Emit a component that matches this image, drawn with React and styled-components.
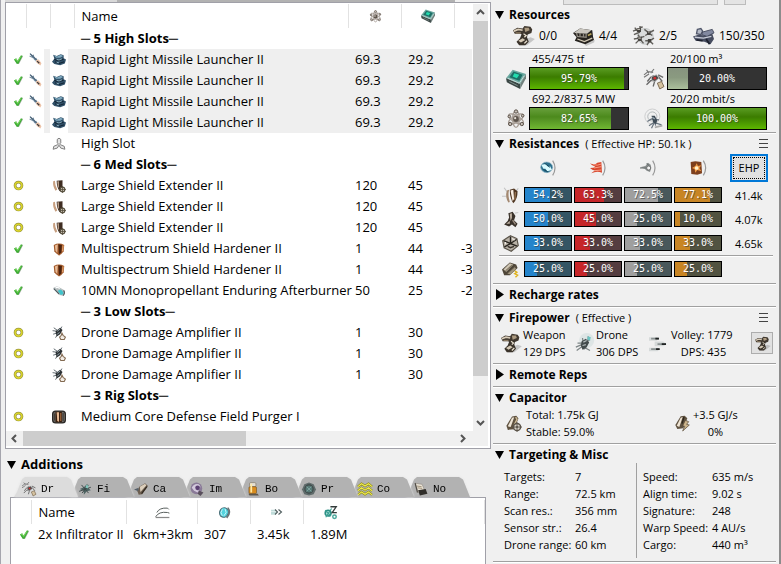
import React from "react";
import styled, { createGlobalStyle } from "styled-components";

const Global = createGlobalStyle`
  *, *::before, *::after { box-sizing: border-box; }
  html, body { margin: 0; background: #f0f0f0; }
  body { font-family: "Open Sans", "Noto Sans", sans-serif; color: #000; }
  button { font: inherit; color: inherit; margin: 0; padding: 0; border: 0; background: none; }
  h2, p, dl, dd, dt { margin: 0; font-weight: normal; }
`;

/* ---------- icons ---------- */

const Svg = styled.svg`
  display: block;
  flex: none;
  width: ${(p) => p.$size}px;
  height: ${(p) => p.$size}px;
  overflow: visible;
`;

const drawings = {
  check: (
    <>
      <path d="M4 14 L8 11 L11 15 L18 3 L22 5 L13 22 L9 22 Z" fill="#8a938a" opacity=".7" />
      <path d="M2 12 L7 9 L10 14 L17 3 L21 4 L12 21 L8 21 Z" fill="#3fae35" />
      <path d="M5 12 L7 11 L10 16 L17 5" fill="none" stroke="#8ade6e" strokeWidth="2" />
    </>
  ),
  ring: (
    <>
      <circle cx="12" cy="12" r="7.5" fill="#fff" stroke="#98953f" strokeWidth="6" />
      <circle cx="12" cy="12" r="7.5" fill="none" stroke="#e0da2a" strokeWidth="3" />
    </>
  ),
  rocket: (
    <>
      <path d="M1 1 L8 5 L17 14 L14 17 L5 8 Z" fill="#9fb4c4" />
      <path d="M2 1 L15 14" stroke="#3d566c" strokeWidth="2" />
      <path d="M1 6 L7 8 M8 3 L9 9 M10 12 L14 10" stroke="#57738a" strokeWidth="1.5" />
      <path d="M13 13 L18 12 L23 19 L21 23 L14 18 Z" fill="#edc3a8" />
      <path d="M15 15 L19 19" stroke="#3c3a3a" strokeWidth="2.4" />
    </>
  ),
  launcher: (
    <>
      <path d="M2 3 L8 5 L15 2 L20 4 L20 9 L24 11 L22 18 L14 21 L4 19 L0 15 L4 10 Z" fill="#32526a" />
      <path d="M3 4 L9 6 L15 3 L19 5 L14 8 L7 8 Z" fill="#7fa9bf" />
      <path d="M4 11 L10 13 L20 11 M5 15 L12 18 L21 15" stroke="#142636" strokeWidth="2" fill="none" />
      <path d="M8 11 L12 12 L17 10 M8 16 L12 17" stroke="#9cc0cf" strokeWidth="1.5" fill="none" />
    </>
  ),
  slot: (
    <g fill="#e4e4e4" stroke="#777" strokeWidth="1.6">
      <path d="M9 4 L12 2 L15 4 V10 L12 13 L9 10 Z" />
      <path d="M10 13 L3 16 L2 21 L9 19 L12 14" />
      <path d="M14 13 L21 16 L22 21 L15 19 L12 14" />
    </g>
  ),
  extender: (
    <>
      <path d="M2 4 Q1 13 6 20 L9 18 Q5 11 5 3 Z" fill="#c79f80" />
      <path d="M8 3 L18 2 L18 14 L13 21 Q8 14 8 3 Z" fill="#3f2d22" />
      <path d="M9 4 L12 4 L12 16 L10 13 Z" fill="#b49a85" />
      <circle cx="18" cy="18" r="4" fill="#d7cfc1" stroke="#57503f" strokeWidth="2" />
      <path d="M18 12 V24 M12 18 H24" stroke="#57503f" strokeWidth="1.4" />
    </>
  ),
  hardener: (
    <>
      <path d="M3 5 Q12 0 21 5 L20 16 Q16 22 12 23 Q6 20 4 16 Z" fill="#a25a2b" />
      <path d="M5 6 L10 4 L9 19 L6 15 Z" fill="#e9bd98" />
      <path d="M11 4 L12 21 L16 18 L17 5 Z" fill="#4a230f" />
      <path d="M19 6 L18 16" stroke="#e7a36d" strokeWidth="2" />
    </>
  ),
  burner: (
    <>
      <path d="M2 7 Q8 2 13 6 L20 10 Q24 16 19 20 L12 19 Z" fill="#b7bfc0" />
      <path d="M10 12 Q14 8 18 12 L20 17 L15 19 Z" fill="#3fc4cc" />
      <path d="M3 8 L12 17 M20 11 Q23 16 19 20" stroke="#4c5a5e" strokeWidth="2" fill="none" />
      <path d="M6 7 Q10 4 13 8" stroke="#fff" strokeWidth="2" fill="none" />
    </>
  ),
  droneAmp: (
    <>
      <path d="M1 8 L9 9 M3 3 L10 8 M2 14 L9 12 M6 20 L10 14 M17 1 L13 8" stroke="#59646a" strokeWidth="1.6" />
      <path d="M6 9 L14 3 L18 7 L14 14 L8 18 Z" fill="#2c3134" />
      <path d="M9 9 L14 5 M9 14 L13 11" stroke="#9eb1b8" strokeWidth="1.6" />
      <path d="M17 12 L19 16 L23 19 L21 23 H15 L13 19 L16 16 Z" fill="#f2ece5" stroke="#826a51" strokeWidth="1.8" />
    </>
  ),
  rig: (
    <>
      <rect x="0" y="1" width="24" height="22" rx="6" fill="#2a2826" />
      <rect x="2" y="3" width="20" height="18" rx="5" fill="#6e6a65" />
      <path d="M6 3 H17 V21 H6 Z" fill="#3a2011" />
      <path d="M8 4 L12 4 L12 20 L9 19 Z" fill="#e8bb95" />
      <path d="M15 5 V19" stroke="#a5693c" strokeWidth="2" />
      <path d="M19 5 V19 M4 6 V18" stroke="#3e3b37" strokeWidth="2" />
    </>
  ),
  atom: (
    <>
      <g fill="none" stroke="#a79d95" strokeWidth="1.6">
        <ellipse cx="12" cy="12" rx="4" ry="10" />
        <ellipse cx="12" cy="12" rx="4" ry="10" transform="rotate(60 12 12)" />
        <ellipse cx="12" cy="12" rx="4" ry="10" transform="rotate(120 12 12)" />
      </g>
      <circle cx="12" cy="12" r="3.5" fill="#5c534b" />
      <circle cx="11" cy="11" r="1.3" fill="#e7e0d8" />
      <g fill="#c6beb5" stroke="#5c534b" strokeWidth="1.2">
        <circle cx="12" cy="3" r="2" />
        <circle cx="4" cy="9" r="1.6" />
        <circle cx="20" cy="8" r="1.6" />
        <circle cx="5" cy="18" r="2" />
        <circle cx="19" cy="18" r="2" />
      </g>
    </>
  ),
  cpu: (
    <>
      <path d="M8 1 L24 6 L17 18 L0 11 Z" fill="#6aa79f" />
      <path d="M0 11 L17 18 L17 24 L1 16 Z" fill="#3a4644" />
      <path d="M24 6 L24 11 L17 24 L17 18 Z" fill="#71807d" />
      <path d="M9 3 L20 7 L16 14 L4 10 Z" fill="#1c6f66" />
      <path d="M10 5 L16 7 L13 11 L8 9 Z" fill="#22dcae" />
      <path d="M2 11 L16 17 L22 8" stroke="#c3dcd8" strokeWidth="1.2" fill="none" />
      <path d="M4 15 L14 20" stroke="#7a8b88" strokeWidth="1.2" />
    </>
  ),
  turret: (
    <>
      <path d="M12 17 L20 14 L25 16 L16 23 L8 23 Z" fill="#999" opacity=".5" />
      <path d="M0 6 L5 3 L11 4 L13 1 L20 2 L22 5 L21 9 L14 12 L8 10 L2 10 Z" fill="#40382f" />
      <path d="M1 7 L6 5 L11 6" stroke="#d9cdb9" strokeWidth="2" fill="none" />
      <path d="M13 3 L18 3 L19 6 L14 8 Z" fill="#ab9a80" />
      <path d="M10 10 L17 9 L16 14 L18 19 L14 23 L7 23 L4 19 L8 15 Z" fill="#3a332a" />
      <path d="M6 18 L11 15 L14 17 L9 20 Z" fill="#d6cab6" />
      <path d="M12 10 L15 12 L13 14 M13 21 L16 18" stroke="#e8dfcf" strokeWidth="1.5" fill="none" />
      <path d="M3 9 L9 9" stroke="#8d7c63" strokeWidth="1.5" />
    </>
  ),
  hardpoint: (
    <>
      <path d="M13 22 L25 17 L24 20 L15 24 Z" fill="#999" opacity=".5" />
      <path d="M0 9 L8 4 L22 6 L23 14 L24 17 L14 22 L2 18 L4 14 Z" fill="#26231f" />
      <path d="M1 9 L8 4 L21 6 L16 10 Z" fill="#c9c6bf" />
      <path d="M4 9 L5 13 L15 14 L15 10 M8 9 V13 M12 10 V13" stroke="#8e8980" strokeWidth="1.5" fill="none" />
      <path d="M5 16 L13 19 L22 15" stroke="#d0c7b3" strokeWidth="1.5" fill="none" />
      <path d="M17 12 L21 10" stroke="#b7a55c" strokeWidth="2" />
    </>
  ),
  drones: (
    <>
      <circle cx="14" cy="13" r="9" fill="#dadcdc" stroke="#bfc2c2" />
      <g stroke="#615f5b" strokeWidth="1.6" fill="none">
        <path d="M0 7 L5 5 L11 2 M2 3 L6 8 M8 1 L8 8 M1 11 L8 8" />
        <path d="M13 5 L18 9 L24 6 M14 12 L19 9 M22 12 L18 9" />
        <path d="M1 16 L7 15 L13 13 M3 21 L8 16 L12 21 M6 11 L8 16" />
        <path d="M14 18 L19 18 L24 15 M16 23 L19 18 L23 22" />
      </g>
      <path d="M4 4 L9 3 L9 8 L5 8 Z M16 7 L20 7 L20 11 L16 11 Z M5 14 L10 13 L10 18 L6 18 Z M17 16 L21 16 L20 20 L17 20 Z" fill="#44423e" />
      <path d="M5 5 L8 5 M17 8 L19 8 M6 15 L9 15" stroke="#bcb8b1" strokeWidth="1.4" />
    </>
  ),
  calibration: (
    <>
      <path d="M0 13 L6 11 L14 12 L22 10 L24 16 L20 22 L13 19 L3 18 Z" fill="#474d60" />
      <path d="M5 5 L9 4 L11 7 L9 11 L4 10 Z" fill="#b6bbc7" stroke="#50566a" strokeWidth="1.5" />
      <path d="M11 8 L22 5 L24 9 L16 13 L10 11 Z" fill="#8289a0" stroke="#3f4558" />
      <path d="M2 14 L12 15 L21 13" stroke="#c8ccd8" strokeWidth="1.6" fill="none" />
      <path d="M15 16 L19 22 M4 17 L11 18" stroke="#1f2330" strokeWidth="2" fill="none" />
    </>
  ),
  droneBay: (
    <>
      <path d="M0 7 L5 3 L11 4 M3 1 L6 5 M0 10 L6 6 M12 0 L8 5" stroke="#777" strokeWidth="1.4" fill="none" />
      <path d="M4 15 L8 10 L12 8 M3 19 L8 14 L13 14 L11 21 M17 7 L23 10 M17 9 L22 15" stroke="#686868" strokeWidth="1.6" fill="none" />
      <path d="M9 9 L15 7 L18 11 L13 15 L9 13 Z" fill="#4b4b4b" stroke="#b9b9b9" />
      <circle cx="13" cy="11" r="1.6" fill="#d12f2f" />
      <path d="M16 17 L21 15 L24 21 L19 24 Z" fill="#d4c19f" stroke="#6c5a42" />
    </>
  ),
  bandwidth: (
    <>
      <circle cx="10" cy="9" r="9" fill="none" stroke="#c6c8c9" />
      <circle cx="10" cy="9" r="5.5" fill="none" stroke="#a7adb0" />
      <path d="M4 15 L9 12 L18 13 M6 20 L12 16 L21 19 M12 10 L14 20 M9 23 L12 17" stroke="#6a7680" strokeWidth="1.5" fill="none" />
      <path d="M9 8 L13 8 L16 14 L14 18 L11 16 Z" fill="#3e4b56" />
      <path d="M10 10 L13 12" stroke="#9eacb6" strokeWidth="1.5" />
      <path d="M13 22 L22 20" stroke="#aaa" strokeWidth="2" />
    </>
  ),
  em: (
    <>
      <ellipse cx="10" cy="11" rx="9" ry="8" fill="#2c6f8c" stroke="#8fb6c8" />
      <path d="M2 7 L9 6 L12 10 L15 9 L18 15 L11 17 L8 13 L5 13 Z" fill="#d9fbff" />
      <path d="M7 5 L15 11 M5 14 L12 18" stroke="#174a61" strokeWidth="1.5" />
      <path d="M19 1 Q26 12 19 23" fill="none" stroke="#999" strokeWidth="1.8" />
    </>
  ),
  thermal: (
    <>
      <path d="M0 5 Q7 8 11 4 L17 3 L18 19 Q10 16 2 20 Q5 16 8 16 Q3 15 0 12 Q6 12 8 10 Q3 9 0 5 Z" fill="#d8472e" />
      <path d="M5 7 Q11 9 17 6 M6 12 L17 10 M7 16 L17 15" stroke="#ffb49b" strokeWidth="1.2" fill="none" />
      <path d="M19 1 Q26 12 19 23" fill="none" stroke="#999" strokeWidth="1.8" />
    </>
  ),
  kinetic: (
    <>
      <path d="M0 11 L8 9 L12 4 L16 7 L17 12 L15 18 L10 16 L7 13 Z" fill="#8b9090" />
      <circle cx="13" cy="12" r="3" fill="#f4f5f5" stroke="#555" />
      <path d="M0 12 L9 12 M10 5 L13 8" stroke="#6a7070" strokeWidth="1.6" />
      <path d="M19 1 Q26 12 19 23" fill="none" stroke="#999" strokeWidth="1.8" />
    </>
  ),
  explosive: (
    <>
      <path d="M1 3 L8 2 L17 3 L18 20 L11 22 L2 21 Z" fill="#7d3f1d" />
      <path d="M10 5 L12 9 L17 8 L14 12 L17 17 L11 15 L8 19 L7 14 L3 12 L8 9 Z" fill="#f09a45" />
      <circle cx="10" cy="12" r="2.8" fill="#fff3cf" />
      <path d="M20 1 Q27 12 20 23" fill="none" stroke="#999" strokeWidth="1.8" />
    </>
  ),
  shield: (
    <>
      <path d="M3 1 L8 8 M23 2 L18 8 M0 13 L6 13" stroke="#c4c4c4" strokeWidth="1.5" />
      <path d="M7 5 Q4 14 9 22 L11 21 Q8 12 10 4 Z" fill="#a38870" />
      <path d="M11 4 L17 2 L22 6 Q22 17 16 23 Q11 16 11 4 Z" fill="#4f3520" />
      <path d="M12 5 L16 4 L17 17 L15 20 Z" fill="#fbf0e4" />
      <path d="M19 7 L18 18" stroke="#93714f" strokeWidth="2" />
    </>
  ),
  armor: (
    <>
      <path d="M9 3 L15 1 L19 7 L17 13 L22 18 L19 23 L14 19 L10 22 L3 19 L8 14 L10 9 Z" fill="#3a322a" />
      <path d="M11 4 L14 3 L14 10 L12 14 Z M6 18 L11 14 L11 18 Z" fill="#c0b2a3" />
      <path d="M15 13 L19 19" stroke="#998b7e" strokeWidth="2" />
      <path d="M18 3 L23 2" stroke="#ccc" strokeWidth="1.5" />
    </>
  ),
  hull: (
    <>
      <path d="M12 1 L21 5 L23 15 L13 23 L3 18 L1 8 Z" fill="#b8b1a6" />
      <path d="M12 2 L12 12 L3 17 M12 12 L22 16 M2 8 L12 12 L21 6" stroke="#28251f" strokeWidth="2" fill="none" />
      <path d="M12 1 L21 5 L23 15 L13 23 L3 18 L1 8 Z" stroke="#5a5449" strokeWidth="1.6" fill="none" />
      <path d="M8 16 L12 18 L17 16" stroke="#38332b" strokeWidth="2" fill="none" />
      <path d="M14 5 L18 7 M5 13 V10" stroke="#f0ece5" strokeWidth="1.5" fill="none" />
    </>
  ),
  damage: (
    <>
      <path d="M0 12 L11 2 L20 5 L22 10 L11 20 L3 20 Z" fill="#4e4638" />
      <path d="M2 12 L11 3 L16 5 L6 15 Z" fill="#cfc6b4" />
      <path d="M5 14 L15 5 M8 18 L19 8" stroke="#7b705b" strokeWidth="1.5" />
      <path d="M8 18 L18 9 L20 11 L12 19 Z" fill="#a39880" />
      <path d="M18 14 L21 16 L18 18 L22 20 L19 23" stroke="#dfb21c" strokeWidth="2" fill="none" />
    </>
  ),
  droneDps: (
    <>
      <circle cx="14" cy="9" r="9" fill="#dbe3e3" opacity=".9" />
      <path d="M3 12 L9 12 L18 8 M2 21 L9 16 L18 21 M9 6 L11 20 M16 4 L15 13 M1 17 L8 14" stroke="#7d8586" strokeWidth="1.5" fill="none" />
      <path d="M8 10 L13 7 L17 11 L14 17 L9 20 L7 15 Z" fill="#434b4c" />
      <path d="M15 4 L19 5 L18 9 L15 8 Z" fill="#6cc4c2" />
      <path d="M10 11 L14 9 M9 15 L13 14" stroke="#b4bdbd" strokeWidth="1.5" />
    </>
  ),
  volley: (
    <>
      <path d="M0 3 H11 L14 5 L11 8 H0 Z M8 9 H20 L25 13 L20 16 H8 Z M0 18 H12 L15 20 L12 23 H0 Z" fill="#d5d9d9" />
      <path d="M3 5 L14 5 M12 13 L24 13 M3 20 L15 20" stroke="#8b9292" strokeWidth="2.4" />
      <path d="M9 5 L14 5 M18 13 L24 13 M10 20 L15 20" stroke="#1f2222" strokeWidth="2.4" />
    </>
  ),
  capacitor: (
    <>
      <path d="M10 2 L16 1 L19 5 L13 20 L4 21 L2 15 Z" fill="#5f5240" />
      <path d="M10 4 L13 3 L8 17 L4 16 Z" fill="#efe6d7" />
      <path d="M15 3 L17 6 L13 14" stroke="#cbb894" strokeWidth="2" fill="none" />
      <circle cx="17" cy="17" r="5" fill="#d7d2c9" stroke="#5b544a" strokeWidth="2" />
      <path d="M17 10 V24 M10 17 H24" stroke="#5b544a" strokeWidth="1.3" />
      <circle cx="17" cy="17" r="1.5" fill="#5b544a" />
    </>
  ),
  recharge: (
    <>
      <path d="M10 2 L16 1 L20 5 L14 20 L5 21 L2 15 Z" fill="#5f5240" />
      <path d="M10 4 L13 3 L8 18 L4 16 Z" fill="#efe4d3" />
      <path d="M15 3 L12 13" stroke="#2e261b" strokeWidth="2" />
      <path d="M17 8 L22 10 L19 14 L23 15 L13 24 L16 17 L13 16 Z" fill="#cdb58c" stroke="#4b3e2b" />
    </>
  ),
  fighter: (
    <>
      <path d="M3 12 L10 9 L16 3 L17 10 L22 14 L15 16 L10 22 L10 15 Z" fill="#4d6362" />
      <path d="M6 5 L18 19 M18 5 L7 19 M2 16 L22 9" stroke="#3b4747" strokeWidth="1.6" />
      <path d="M14 5 L18 6 L17 11 L13 10 Z" fill="#81c5bb" />
    </>
  ),
  cargo: (
    <>
      <path d="M9 8 L19 2 L24 7 L14 21 L8 22 L6 16 Z" fill="#6d5f50" />
      <path d="M10 8 L19 3 L21 6 L11 17 Z" fill="#dccfbc" />
      <path d="M0 13 L8 10 L7 16 Z" fill="#56606a" />
      <path d="M22 8 L13 20" stroke="#30281f" strokeWidth="2" />
    </>
  ),
  implant: (
    <>
      <circle cx="11" cy="11" r="10" fill="#8a7a98" />
      <path d="M3 10 Q7 2 15 4 Q20 8 16 12 L13 18 L7 15 Z" fill="#d3c9dc" />
      <circle cx="13" cy="10" r="4" fill="#5b4072" />
      <path d="M16 15 L23 18 L18 24 L13 20 Z" fill="#594f5c" />
    </>
  ),
  booster: (
    <>
      <rect x="6" y="1" width="11" height="7" rx="2" fill="#e4dfd4" stroke="#756b5a" />
      <rect x="5" y="8" width="13" height="12" rx="2" fill="#d98c1e" stroke="#6a4a1d" />
      <path d="M9 3 V18" stroke="#ffe9a5" strokeWidth="3" />
      <path d="M4 20 H20 L22 23 H6 Z" fill="#5e574c" />
    </>
  ),
  projected: (
    <>
      <path d="M0 13 L4 4 L12 1 L20 4 L24 13 L20 21 L12 23 L4 21 Z" fill="#5f6b6b" />
      <circle cx="12" cy="12" r="7" fill="#587a76" stroke="#3d4848" strokeWidth="2" />
      <path d="M8 8 L16 16 M16 8 L8 16" stroke="#7fa39f" strokeWidth="1.6" />
    </>
  ),
  command: (
    <g fill="none">
      <path d="M0 8 L6 3 L12 7 L18 3 L24 8 M0 15 L6 10 L12 14 L18 10 L24 15 M0 22 L6 17 L12 21 L18 17 L24 22" stroke="#8b8a18" strokeWidth="4" />
      <path d="M0 8 L6 3 L12 7 L18 3 L24 8 M0 15 L6 10 L12 14 L18 10 L24 15 M0 22 L6 17 L12 21 L18 17 L24 22" stroke="#eee94e" strokeWidth="2" />
    </g>
  ),
  notes: (
    <>
      <path d="M2 2 L14 4 L18 14 L7 18 Z" fill="#e9e3d6" stroke="#8b857c" />
      <path d="M7 14 L20 12 L23 20 L10 23 Z" fill="#302e2a" />
      <path d="M5 7 L13 8 M6 10 L14 11" stroke="#9b8c72" strokeWidth="1.5" />
      <path d="M2 2 L6 18" stroke="#514d46" strokeWidth="2" />
    </>
  ),
  range: (
    <g fill="none" stroke="#59605e" strokeWidth="1.6">
      <path d="M3 12 Q7 4 20 5 L22 7" />
      <path d="M1 19 Q6 10 20 12 L23 13" />
      <path d="M1 20 H23" stroke="#888" strokeWidth="2" />
    </g>
  ),
  cycle: (
    <>
      <ellipse cx="11" cy="12" rx="8" ry="9" fill="#52d3de" stroke="#4c6f78" strokeWidth="2" transform="rotate(20 11 12)" />
      <path d="M8 6 Q3 12 8 18 M13 5 L15 12 L11 18" stroke="#e2fcff" strokeWidth="1.5" fill="none" />
      <path d="M18 3 Q25 12 16 22" stroke="#687477" strokeWidth="3" fill="none" />
    </>
  ),
  speed: (
    <>
      <path d="M0 9 H10 M0 13 H12 M0 16 H9" stroke="#a8cfcd" strokeWidth="3" opacity=".7" />
      <path d="M8 7 L13 12 L8 17 M15 7 L21 12 L15 17" stroke="#4f5d5e" strokeWidth="2.2" fill="none" />
    </>
  ),
  tracking: (
    <>
      <circle cx="7" cy="14" r="5" fill="#a8dcd5" stroke="#2b8d83" strokeWidth="2.6" />
      <circle cx="18" cy="20" r="3" fill="none" stroke="#4ba79c" strokeWidth="2.5" />
      <path d="M3 21 L13 6 M2 9 L12 19" stroke="#3ba094" strokeWidth="2" />
      <path d="M11 3 H21 L14 13 H22" stroke="#333c3b" strokeWidth="2.2" fill="none" />
    </>
  ),
};

const Icon = ({ name, size = 16 }) => (
  <Svg $size={size} viewBox="0 0 24 24" aria-hidden="true">{drawings[name]}</Svg>
);

const Triangle = ({ open }) => (
  <Svg $size={9} viewBox="0 0 9 9" aria-hidden="true">
    <path d={open ? "M0 1 H9 L4.5 9 Z" : "M1 -1 L9 4.5 L1 10 Z"} />
  </Svg>
);

const Chevron = ({ d }) => (
  <Svg $size={9} viewBox="0 0 9 9" aria-hidden="true">
    <path d={d} fill="none" stroke="#555" strokeWidth="2" />
  </Svg>
);

/* ---------- window ---------- */

const Window = styled.div`
  display: grid;
  grid-template-columns: minmax(0, 1fr) 288px;
  min-height: 100vh;
  border-left: 1px solid #a5a5ad;
  border-right: 2px solid #8c8c8c;
  background: #f0f0f0;
  line-height: 17px;
`;

const Fitting = styled.main`
  display: flex;
  flex-direction: column;
  min-width: 0;
  padding: 0 0 0 4px;
`;

const FitTabs = styled.div`
  height: 2px;
  margin-right: 36px;
  background: linear-gradient(#d8d8d8, #d8d8d8) 0 0 / 112px 100% no-repeat, #b2b2b2;
`;

const FitPanel = styled.section`
  display: grid;
  grid-template-columns: minmax(0, 1fr) 15px;
  column-gap: 1px;
  padding: 1px 2px 2px 0;
  border: 1px solid #a0a0a8;
  background: #fff;
  font-size: 13px;
`;

const TableClip = styled.div`
  min-width: 0;
  overflow: hidden;
  padding-bottom: 4px;
`;

const Modules = styled.table`
  width: 100%;
  table-layout: fixed;
  border-collapse: collapse;
`;

const HeadCell = styled.th`
  width: ${(p) => (p.$w ? `${p.$w}px` : "auto")};
  height: 24px;
  padding: 0 6px 0 7px;
  border-right: ${(p) => (p.$last ? "0" : "1px solid #e2e2e2")};
  font-weight: normal;
  text-align: left;
  svg { margin: ${(p) => (p.$wide ? "0 0 0 13px" : "0 auto")}; }
`;

const Cell = styled.td`
  height: 21px;
  padding: 0 0 0 7px;
  white-space: nowrap;
  background: ${(p) => (p.$lit ? "#efefef" : "#fff")};
`;

const GroupCell = styled(Cell)`
  font-weight: bold;
`;

const IconCell = styled(Cell)`
  padding: 0 0 0 ${(p) => p.$pad}px;
  background: ${(p) =>
    p.$lit ? "linear-gradient(to right, #fff 18px, #efefef 18px)" : "#fff"};
`;

const VScroll = styled.div`
  display: grid;
  grid-template-rows: 17px minmax(0, 356fr) minmax(0, 38fr) 17px;
  background: #f0f0f0;
`;

const HScroll = styled.div`
  grid-column: 1 / -1;
  display: grid;
  grid-template-columns: 17px minmax(0, 224fr) minmax(0, 208fr) 17px 17px;
  height: 15px;
  background: #f0f0f0;
`;

const ScrollButton = styled.button`
  display: grid;
  place-items: center;
`;

const Thumb = styled.div`
  background: #cdcdcd;
`;

/* ---------- additions ---------- */

const Additions = styled.section`
  flex: 1;
  display: flex;
  flex-direction: column;
  padding: 7px 5px 0 2px;
  font-size: 13px;
`;

const Disclosure = styled.button`
  display: flex;
  align-items: center;
  gap: 5px;
  height: 17px;
  font-weight: bold;
  white-space: nowrap;
`;

const TabStrip = styled.div`
  display: flex;
  margin-top: 4px;
  padding-left: 7px;
`;

const TabShell = styled.div`
  z-index: ${(p) => p.$z};
  width: 64px;
  margin-right: -8px;
  filter: drop-shadow(0 0 1px #e2e2e2);
`;

const Tab = styled.button`
  display: flex;
  align-items: center;
  gap: 5px;
  width: 100%;
  height: 20px;
  padding: 4px 0 0 8px;
  clip-path: polygon(0 100%, 3px 75%, 8px 12%, 11px 0, 53px 0, 57px 12%, 64px 100%);
  background: ${(p) => (p.$on ? "#dcdcdc" : "#b2b2b2")};
  font: 11px "Liberation Mono", monospace;
`;

const DronePanel = styled.div`
  flex: 1;
  margin-left: 3px;
  padding-top: 2px;
  border: 1px solid #a0a0a8;
  border-bottom: 0;
  background: #fff;
`;

/* ---------- statistics ---------- */

const Stats = styled.aside`
  padding: 0 3px 0 2px;
  font-size: 11px;
`;

const Toolbar = styled.div`
  display: flex;
  justify-content: flex-end;
  gap: 6px;
  height: 5px;
  padding-right: 30px;
`;

const ToolBox = styled.div`
  width: ${(p) => p.$w}px;
  border: 1px solid #bcbcbc;
  border-top: 0;
  background: #e4e4e4;
`;

const Section = styled.section`
  padding-bottom: ${(p) => p.$pb || 4}px;
  border-bottom: 1px solid #fff;
  box-shadow: inset 0 -1px 0 #a0a0a0;
`;

const SectionHead = styled.h2`
  display: flex;
  align-items: center;
  height: 18px;
  padding: 0 8px 0 2px;
  font-size: 12px;
`;

const Note = styled.span`
  margin-left: 6px;
  font-size: 11px;
`;

const MenuButton = styled.button`
  display: grid;
  align-content: space-between;
  width: 9px;
  height: 9px;
  margin-left: auto;
  span { height: 1px; background: #444; }
`;

const Rule = styled.hr`
  height: 2px;
  margin: 0 3px 0 6px;
  border: 0;
  background: linear-gradient(#a0a0a0 50%, #fff 50%);
`;

const Counts = styled.div`
  display: grid;
  grid-template-columns: 60fr 60fr 60fr 76fr;
  height: 25px;
  padding: 0 7px 0 20px;
  font-size: 12px;
`;

const Pair = styled.div`
  display: flex;
  align-items: center;
  gap: ${(p) => p.$gap || 5}px;
  white-space: nowrap;
`;

const Meters = styled.div`
  display: grid;
  grid-template-columns: repeat(2, minmax(0, 1fr));
  column-gap: 15px;
  padding: 0 9px 0 13px;
`;

const Meter = styled.div`
  display: grid;
  grid-template-columns: 21px minmax(0, 1fr);
  column-gap: 2px;
  align-items: center;
  > span { grid-column: 2; height: 17px; padding-left: 3px; }
`;

const Track = styled.div`
  display: grid;
  height: ${(p) => (p.$small ? 16 : 23)}px;
  border: 1px solid #000;
  background: ${(p) => p.$bg};
  > * { grid-area: 1 / 1; }
`;

const Fill = styled.div`
  background: ${(p) => p.$paint};
`;

const TrackText = styled.div`
  z-index: 1;
  align-self: center;
  color: #fff;
  font: 10px/12px "DejaVu Sans Mono", monospace;
  text-align: center;
  text-shadow: 1px 1px 0 rgba(60, 60, 60, 0.6);
`;

const Bar = ({ value, text, paint, bg, small }) => (
  <Track $small={small} $bg={bg}>
    <Fill $paint={paint} style={{ width: `${value}%` }} />
    <TrackText>{text}</TrackText>
  </Track>
);

const ResistTable = styled.table`
  width: 100%;
  table-layout: fixed;
  border-collapse: collapse;
  col:first-child { width: 30px; }
  col:last-child { width: 53px; }
  td, th { padding: 0 1px; height: 24px; font-weight: normal; text-align: left; }
  td:first-child { padding-left: 9px; }
  td:last-child { padding-left: 12px; }
  thead th { height: 31px; }
  thead th:last-child { padding: 0 8px 0 7px; }
  thead svg { margin: 0 auto; }
`;

const EhpButton = styled.button`
  display: block;
  width: 100%;
  height: 28px;
  border: 2px solid #0078d7;
  background: #e1e1e1;
  outline: 1px dotted #000;
  outline-offset: -4px;
`;

const Fire = styled.div`
  display: grid;
  grid-template-columns: 74px 74px minmax(0, 1fr) 22px;
  align-items: center;
  height: 34px;
  padding: 0 3px 0 8px;
`;

const Lines = styled.div`
  text-align: ${(p) => p.$align || "left"};
`;

const VolleyList = styled.dl`
  display: grid;
  grid-template-columns: auto auto;
  column-gap: 3px;
  dt { text-align: right; }
`;

const WeaponButton = styled.button`
  display: grid;
  place-items: center;
  width: 22px;
  height: 22px;
  border: 1px solid #adadad;
  background: #e1e1e1;
`;

const Capacitor = styled.div`
  display: grid;
  grid-template-columns: 169px minmax(0, 1fr);
  height: 34px;
  padding-left: 12px;
`;

const Misc = styled.div`
  display: grid;
  grid-template-columns: 143px minmax(0, 1fr);
`;

const Facts = styled.dl`
  display: grid;
  grid-template-columns: ${(p) => p.$label}px minmax(0, 1fr);
  padding: 5px 0 5px ${(p) => (p.$ruled ? 6 : 11)}px;
  border-left: ${(p) => (p.$ruled ? "1px solid #a0a0a0" : "0")};
  white-space: nowrap;
`;

/* ---------- data ---------- */

const launcher = { state: "check", ammo: "rocket", icon: "launcher", name: "Rapid Light Missile Launcher II", pg: "69.3", cpu: "29.2", lit: true };
const extender = { state: "ring", icon: "extender", name: "Large Shield Extender II", pg: "120", cpu: "45" };
const hardener = { state: "check", icon: "hardener", name: "Multispectrum Shield Hardener II", pg: "1", cpu: "44", cap: "-3" };
const amplifier = { state: "ring", icon: "droneAmp", name: "Drone Damage Amplifier II", pg: "1", cpu: "30" };

const rows = [
  { group: "─ 5 High Slots─" },
  launcher, launcher, launcher, launcher,
  { icon: "slot", name: "High Slot" },
  { group: "─ 6 Med Slots─" },
  extender, extender, extender,
  hardener, hardener,
  { state: "check", icon: "burner", name: "10MN Monopropellant Enduring Afterburner", pg: "50", cpu: "25", cap: "-2" },
  { group: "─ 3 Low Slots─" },
  amplifier, amplifier, amplifier,
  { group: "─ 3 Rig Slots─" },
  { state: "ring", icon: "rig", name: "Medium Core Defense Field Purger I" },
];

const tabs = [
  ["droneBay", "Dr"], ["fighter", "Fi"], ["cargo", "Ca"], ["implant", "Im"],
  ["booster", "Bo"], ["projected", "Pr"], ["command", "Co"], ["notes", "No"],
];

const green = "linear-gradient(#5a9c22, #3c7c00 42%, #3f8400 50%, #5db600)";
const softGreen = "linear-gradient(#689f3c, #4c8a1c 42%, #528f22 50%, #70b732)";
const paleGreen = "linear-gradient(#87947f, #8a9a80 45%, #abc09c)";

const meters = [
  ["cpu", "455/475 tf", 95.79, "95.79%", green],
  ["droneBay", "20/100 m³", 20, "20.00%", paleGreen],
  ["atom", "692.2/837.5 MW", 82.65, "82.65%", softGreen],
  ["bandwidth", "20/20 mbit/s", 100, "100.00%", green],
];

const damageTypes = [
  ["#2484cb", "#345564"],
  ["#c62629", "#553d40"],
  ["#9f9f9f", "#49585b"],
  ["#c88524", "#525341"],
];

const layers = [
  ["shield", [54.2, 63.3, 72.5, 77.1], "41.4k"],
  ["armor", [50, 45, 25, 10], "4.07k"],
  ["hull", [33, 33, 33, 33], "4.65k"],
];

const Layer = ({ icon, values, hp }) => (
  <tr>
    <td><Icon name={icon} size={17} /></td>
    {values.map((v, i) => (
      <td key={i}>
        <Bar small value={v} text={`${v.toFixed(1)}%`} paint={damageTypes[i][0]} bg={damageTypes[i][1]} />
      </td>
    ))}
    <td>{hp}</td>
  </tr>
);

const ResistCols = () => (
  <colgroup><col /><col /><col /><col /><col /><col /></colgroup>
);

const Head = ({ title, note, open = true, menu }) => (
  <SectionHead>
    <Disclosure aria-expanded={open}><Triangle open={open} />{title}</Disclosure>
    {note && <Note>{note}</Note>}
    {menu && <MenuButton aria-label={`${title} menu`}><span /><span /><span /></MenuButton>}
  </SectionHead>
);

const FactList = ({ items, label, ruled }) => (
  <Facts $label={label} $ruled={ruled}>
    {items.map(([k, v]) => (
      <React.Fragment key={k}><dt>{k}</dt><dd>{v}</dd></React.Fragment>
    ))}
  </Facts>
);

export default function App() {
  return (
    <>
      <Global />
      <Window>
        <Fitting>
          <FitTabs />
          <FitPanel>
            <TableClip>
              <Modules>
                <thead>
                  <tr>
                    <HeadCell $w={20} />
                    <HeadCell $w={24} />
                    <HeadCell $w={24} />
                    <HeadCell>Name</HeadCell>
                    <HeadCell $w={53}><Icon name="atom" size={13} /></HeadCell>
                    <HeadCell $w={53}><Icon name="cpu" size={14} /></HeadCell>
                    <HeadCell $w={18} $last />
                  </tr>
                </thead>
                <tbody>
                  {rows.map((r, i) =>
                    r.group ? (
                      <tr key={i}><Cell colSpan={3} /><GroupCell colSpan={4}>{r.group}</GroupCell></tr>
                    ) : (
                      <tr key={i}>
                        <IconCell $pad={7}>{r.state && <Icon name={r.state} size={11} />}</IconCell>
                        <IconCell $pad={3} $lit={r.lit}>{r.ammo && <Icon name={r.ammo} size={13} />}</IconCell>
                        <IconCell $pad={2} $lit={r.lit}><Icon name={r.icon} size={14} /></IconCell>
                        <Cell $lit={r.lit}>{r.name}</Cell>
                        <Cell $lit={r.lit}>{r.pg}</Cell>
                        <Cell $lit={r.lit}>{r.cpu}</Cell>
                        <Cell $lit={r.lit}>{r.cap}</Cell>
                      </tr>
                    )
                  )}
                </tbody>
              </Modules>
            </TableClip>
            <VScroll>
              <ScrollButton aria-label="Scroll up"><Chevron d="M1 6 L4.5 2.5 L8 6" /></ScrollButton>
              <Thumb />
              <div />
              <ScrollButton aria-label="Scroll down"><Chevron d="M1 3 L4.5 6.5 L8 3" /></ScrollButton>
            </VScroll>
            <HScroll>
              <ScrollButton aria-label="Scroll left"><Chevron d="M6 1 L2.5 4.5 L6 8" /></ScrollButton>
              <Thumb />
              <div />
              <ScrollButton aria-label="Scroll right"><Chevron d="M3 1 L6.5 4.5 L3 8" /></ScrollButton>
            </HScroll>
          </FitPanel>

          <Additions>
            <Disclosure aria-expanded="true"><Triangle open />Additions</Disclosure>
            <TabStrip role="tablist">
              {tabs.map(([icon, label], i) => (
                <TabShell key={label} $z={tabs.length - i}>
                  <Tab role="tab" aria-selected={i === 0} $on={i === 0}><Icon name={icon} size={14} />{label}</Tab>
                </TabShell>
              ))}
            </TabStrip>
            <DronePanel>
              <Modules>
                <thead>
                  <tr>
                    <HeadCell $w={20} />
                    <HeadCell $w={95}>Name</HeadCell>
                    <HeadCell $w={71}><Icon name="range" size={15} /></HeadCell>
                    <HeadCell $w={53}><Icon name="cycle" size={13} /></HeadCell>
                    <HeadCell $w={53}><Icon name="speed" size={12} /></HeadCell>
                    <HeadCell $wide><Icon name="tracking" size={14} /></HeadCell>
                  </tr>
                </thead>
                <tbody>
                  <tr>
                    <IconCell $pad={8}><Icon name="check" size={11} /></IconCell>
                    <Cell>2x Infiltrator II</Cell>
                    <Cell>6km+3km</Cell>
                    <Cell>307</Cell>
                    <Cell>3.45k</Cell>
                    <Cell>1.89M</Cell>
                  </tr>
                </tbody>
              </Modules>
            </DronePanel>
          </Additions>
        </Fitting>

        <Stats>
          <Toolbar><ToolBox $w={155} /><ToolBox $w={22} /></Toolbar>

          <Section $pb={3}>
            <Head title="Resources" />
            <Counts>
              <Pair><Icon name="turret" size={21} />0/0</Pair>
              <Pair><Icon name="hardpoint" size={21} />4/4</Pair>
              <Pair><Icon name="drones" size={21} />2/5</Pair>
              <Pair><Icon name="calibration" size={21} />150/350</Pair>
            </Counts>
            <Rule />
            <Meters>
              {meters.map(([icon, label, value, text, paint]) => (
                <Meter key={label}>
                  <span>{label}</span>
                  <Icon name={icon} size={20} />
                  <Bar value={value} text={text} paint={paint} bg="#333" />
                </Meter>
              ))}
            </Meters>
          </Section>

          <Section $pb={3}>
            <Head title="Resistances" note="( Effective HP: 50.1k )" menu />
            <ResistTable>
              <ResistCols />
              <thead>
                <tr>
                  <th />
                  {["em", "thermal", "kinetic", "explosive"].map((n) => (
                    <th key={n}><Icon name={n} size={16} /></th>
                  ))}
                  <th><EhpButton>EHP</EhpButton></th>
                </tr>
              </thead>
              <tbody>
                {layers.map(([icon, values, hp]) => (
                  <Layer key={icon} icon={icon} values={values} hp={hp} />
                ))}
              </tbody>
            </ResistTable>
            <Rule />
            <ResistTable>
              <ResistCols />
              <tbody><Layer icon="damage" values={[25, 25, 25, 25]} /></tbody>
            </ResistTable>
          </Section>

          <Section><Head title="Recharge rates" open={false} /></Section>

          <Section>
            <Head title="Firepower" note="( Effective )" menu />
            <Fire>
              <Pair $gap={2}><Icon name="turret" size={20} /><Lines $align="center">Weapon<br />129 DPS</Lines></Pair>
              <Pair $gap={1}><Icon name="droneDps" size={20} /><Lines>Drone<br />306 DPS</Lines></Pair>
              <Pair $gap={5}>
                <Icon name="volley" size={17} />
                <VolleyList><dt>Volley:</dt><dd>1779</dd><dt>DPS:</dt><dd>435</dd></VolleyList>
              </Pair>
              <WeaponButton aria-label="Weapon settings"><Icon name="turret" size={15} /></WeaponButton>
            </Fire>
          </Section>

          <Section><Head title="Remote Reps" open={false} /></Section>

          <Section>
            <Head title="Capacitor" />
            <Capacitor>
              <Pair $gap={4}><Icon name="capacitor" size={17} /><Lines>Total: 1.75k GJ<br />Stable: 59.0%</Lines></Pair>
              <Pair $gap={3}><Icon name="recharge" size={16} /><Lines $align="center">+3.5 GJ/s<br />0%</Lines></Pair>
            </Capacitor>
          </Section>

          <Section>
            <Head title="Targeting & Misc" />
            <Misc>
              <FactList
                label={71}
                items={[["Targets:", "7"], ["Range:", "72.5 km"], ["Scan res.:", "356 mm"], ["Sensor str.:", "26.4"], ["Drone range:", "60 km"]]}
              />
              <FactList
                ruled
                label={69}
                items={[["Speed:", "635 m/s"], ["Align time:", "9.02 s"], ["Signature:", "248"], ["Warp Speed:", "4 AU/s"], ["Cargo:", "440 m³"]]}
              />
            </Misc>
          </Section>
        </Stats>
      </Window>
    </>
  );
}
